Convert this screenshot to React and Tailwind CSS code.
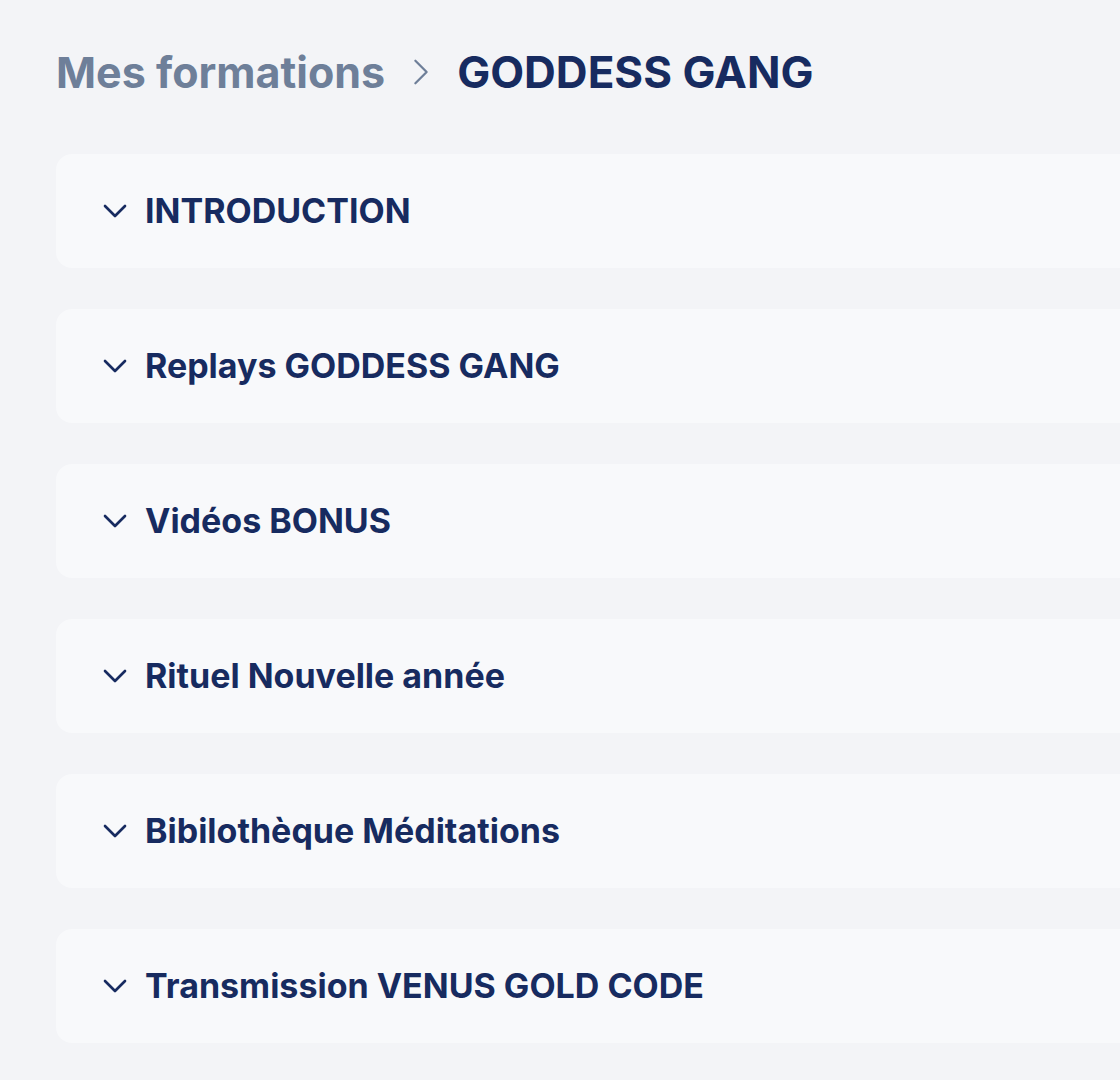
import { useState } from "react";

const modules = [
  "INTRODUCTION",
  "Replays GODDESS GANG",
  "Vidéos BONUS",
  "Rituel Nouvelle année",
  "Bibilothèque Méditations",
  "Transmission VENUS GOLD CODE",
];

function ChevronDown({ className }) {
  return (
    <svg viewBox="0 0 24 24" fill="none" stroke="currentColor" strokeWidth={2} strokeLinecap="round" strokeLinejoin="round" className={className}>
      <path d="m19.5 8.25-7.5 7.5-7.5-7.5" />
    </svg>
  );
}

function ChevronRight({ className }) {
  return (
    <svg viewBox="0 0 24 24" fill="none" stroke="currentColor" strokeWidth={1.5} strokeLinecap="round" strokeLinejoin="round" className={className}>
      <path d="m8.25 4.5 7.5 7.5-7.5 7.5" />
    </svg>
  );
}

export default function App() {
  const [open, setOpen] = useState(null);

  return (
    <div className="min-h-screen overflow-hidden bg-[#f3f4f7] px-14 pt-12" style={{ fontFamily: "Inter, 'Noto Sans', sans-serif" }}>
      <nav className="flex items-center gap-[18px] text-[43px] font-bold leading-[48px]">
        <span className="text-[#6e7f99]">Mes formations</span>
        <ChevronRight className="h-9 w-9 text-[#6e7f99]" />
        <span className="text-[44px] text-[#172b60]">GODDESS GANG</span>
      </nav>

      <div className="mt-[58px] flex w-[1140px] flex-col gap-[41px]">
        {modules.map((title, i) => (
          <button
            key={title}
            type="button"
            onClick={() => setOpen(open === i ? null : i)}
            className="flex h-[114px] items-center gap-[14px] rounded-l-2xl bg-[#f8f9fb] pl-[43px] text-left"
          >
            <ChevronDown className="h-8 w-8 shrink-0 text-[#172b60]" />
            <span className="text-[34px] font-bold leading-9 text-[#172b60]">{title}</span>
          </button>
        ))}
      </div>
    </div>
  );
}
